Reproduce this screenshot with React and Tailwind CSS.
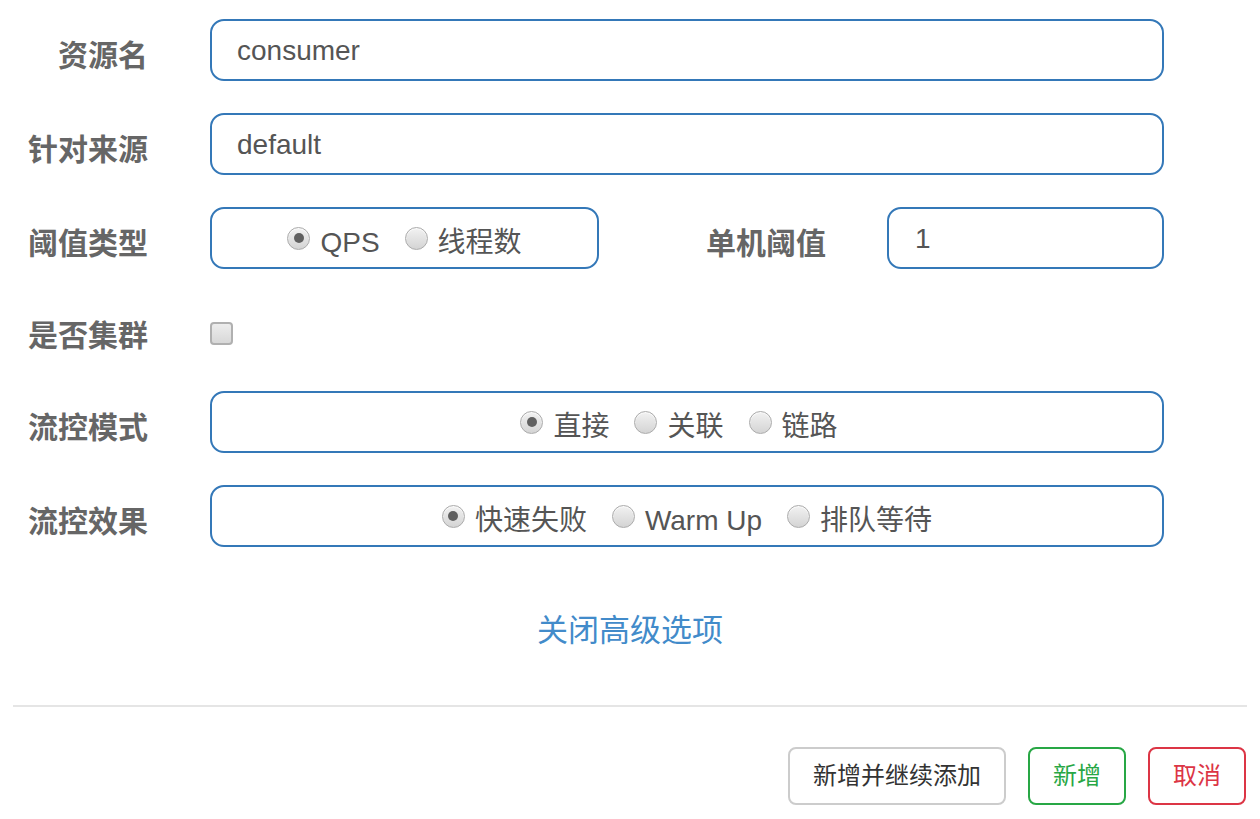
import React from "react";

const Radio = ({ checked, label }) => (
  <label className="flex items-center">
    <span className="flex h-[23px] w-[23px] items-center justify-center rounded-full border border-[#ababab] bg-linear-to-b from-[#f2f2f2] to-[#d4d4d4] shadow-[inset_0_1px_1px_rgba(255,255,255,0.8)]">
      {checked && <span className="h-[10px] w-[10px] rounded-full bg-[#606060]" />}
    </span>
    <span className="ml-[10px] mt-[10px] text-[28px] leading-none text-[#555]">{label}</span>
  </label>
);

const Label = ({ children, className = "w-[148px]" }) => (
  <div className={`${className} shrink-0 pt-[11px] text-right text-[30px] font-bold leading-none text-[#666]`}>
    {children}
  </div>
);

const Box = ({ children, className = "" }) => (
  <div className={`flex h-[62px] items-center rounded-[14px] border-2 border-[#3478b8] bg-white ${className}`}>
    {children}
  </div>
);

const App = () => {
  return (
    <div className="h-[819px] w-[1260px] bg-white font-['Liberation_Sans','Noto_Sans_CJK_SC',sans-serif]">
      <div className="flex flex-col gap-[32px] pt-[19px]">
        <div className="flex h-[62px] items-center">
          <Label>资源名</Label>
          <Box className="ml-[62px] w-[954px] pl-[25px]">
            <span className="mt-[2px] text-[28px] text-[#555]">consumer</span>
          </Box>
        </div>
        <div className="flex h-[62px] items-center">
          <Label>针对来源</Label>
          <Box className="ml-[62px] w-[954px] pl-[25px]">
            <span className="mt-[2px] text-[28px] text-[#555]">default</span>
          </Box>
        </div>
        <div className="flex h-[62px] items-center">
          <Label>阈值类型</Label>
          <Box className="ml-[62px] w-[389px] justify-center gap-[25px]">
            <Radio checked label="QPS" />
            <Radio label="线程数" />
          </Box>
          <Label className="w-[227px]">单机阈值</Label>
          <Box className="ml-[61px] w-[277px] pl-[26px]">
            <span className="mt-[2px] text-[28px] text-[#555]">1</span>
          </Box>
        </div>
        <div className="flex h-[58px] items-center">
          <Label>是否集群</Label>
          <div className="ml-[62px] mt-[7px] h-[23px] w-[23px] rounded-[4px] border-2 border-[#b0b0b0] bg-linear-to-b from-[#ededed] to-[#d8d8d8]" />
        </div>
        <div className="flex h-[62px] items-center">
          <Label>流控模式</Label>
          <Box className="ml-[62px] w-[954px] justify-center gap-[25px] pr-[16px]">
            <Radio checked label="直接" />
            <Radio label="关联" />
            <Radio label="链路" />
          </Box>
        </div>
        <div className="flex h-[62px] items-center">
          <Label>流控效果</Label>
          <Box className="ml-[62px] w-[954px] justify-center gap-[25px]">
            <Radio checked label="快速失败" />
            <Radio label="Warm Up" />
            <Radio label="排队等待" />
          </Box>
        </div>
      </div>

      <div className="mt-[68px] text-center text-[31px] leading-none text-[#428bca]">关闭高级选项</div>

      <div className="mx-[13px] mt-[59px] h-[2px] bg-[#e5e5e5]" />

      <div className="mt-[40px] flex justify-end gap-[22px] pr-[14px]">
        <button className="h-[58px] w-[218px] rounded-[8px] border-2 border-[#cccccc] text-[24px] text-[#333]">
          新增并继续添加
        </button>
        <button className="h-[58px] w-[98px] rounded-[8px] border-2 border-[#28a745] text-[24px] text-[#28a745]">
          新增
        </button>
        <button className="h-[58px] w-[98px] rounded-[8px] border-2 border-[#dc3545] text-[24px] text-[#dc3545]">
          取消
        </button>
      </div>
    </div>
  );
};

export default App;
